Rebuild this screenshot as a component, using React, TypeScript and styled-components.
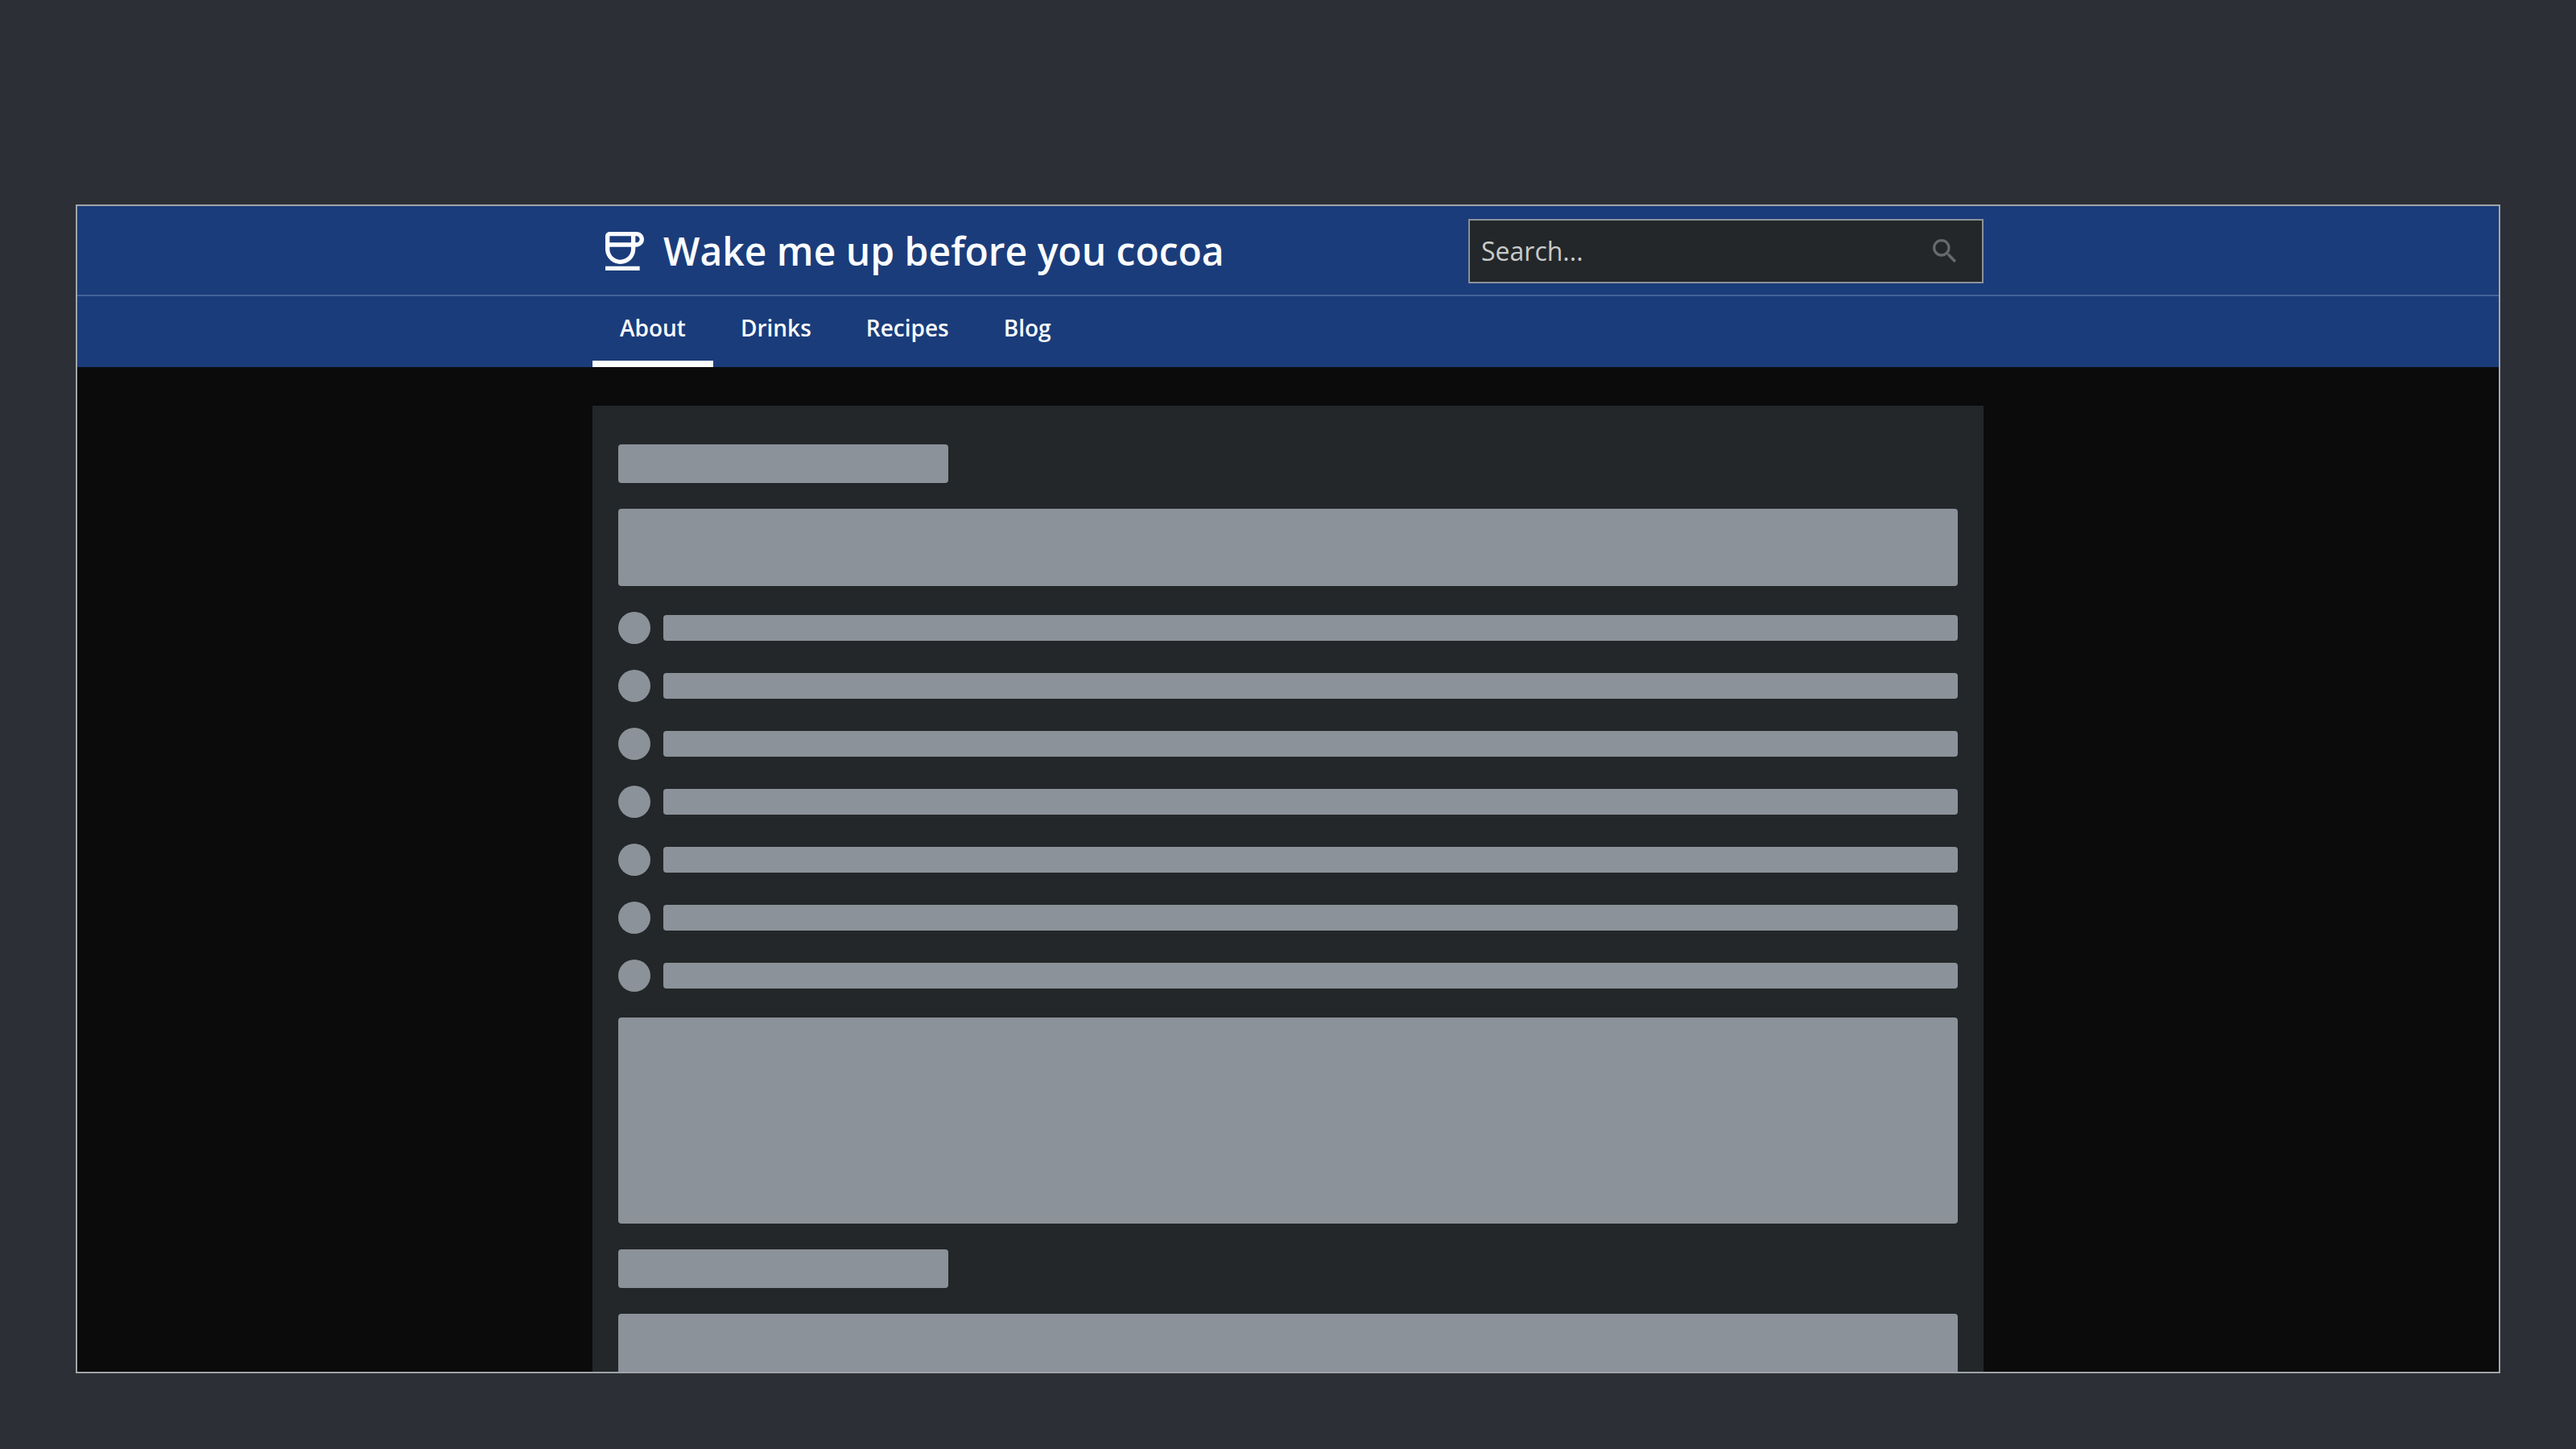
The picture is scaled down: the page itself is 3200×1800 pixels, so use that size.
import React from "react";
import styled, { createGlobalStyle } from "styled-components";

const GlobalStyle = createGlobalStyle`
  *, *::before, *::after { box-sizing: border-box; }
  body {
    margin: 0;
    background: #2c2f36;
    color: #fafcff;
    font-family: "Open Sans", "Noto Sans", sans-serif;
  }
`;

const Page = styled.div`
  display: flex;
  height: 100vh;
  padding: 254px 94px 94px;
`;

const Frame = styled.div`
  flex: 1;
  min-width: 0;
  overflow: hidden;
  border: 2px solid #a1a5a9;
  background: #0b0b0b;
`;

const Header = styled.header`
  background: #1b3c7a;
`;

const Container = styled.div`
  display: flex;
  width: 100%;
  max-width: 1728px;
  margin: 0 auto;
`;

const Masthead = styled.div`
  padding: 16px 0;
  box-shadow: inset 0 -2px #45629b;
`;

const MastheadRow = styled(Container)`
  align-items: center;
  justify-content: space-between;
  padding-left: 16px;
`;

const Brand = styled.a`
  display: flex;
  align-items: center;
  gap: 24px;
  color: inherit;
  text-decoration: none;
`;

const Title = styled.span`
  font-size: 48px;
  font-weight: 600;
  line-height: 64px;
  white-space: nowrap;
`;

const SearchBox = styled.form`
  display: flex;
  align-items: center;
  width: 640px;
  height: 80px;
  padding: 0 26px 0 14px;
  border: 2px solid #8b9299;
  background: #232729;
`;

const SearchInput = styled.input`
  flex: 1;
  min-width: 0;
  padding: 0;
  border: 0;
  outline: 0;
  background: transparent;
  color: #c9cacb;
  font: 400 32px/48px "Open Sans", "Noto Sans", sans-serif;

  &::placeholder {
    color: #c9cacb;
    opacity: 1;
  }
`;

const SearchButton = styled.button`
  display: flex;
  padding: 0;
  border: 0;
  background: transparent;
  color: #666a6d;
`;

const Tab = styled.a<{ $active?: boolean }>`
  height: 88px;
  padding: 20px 34px 0;
  color: inherit;
  font-size: 28px;
  font-weight: 600;
  line-height: 38px;
  text-decoration: none;
  border-bottom: 8px solid ${(p) => (p.$active ? "#fafcfb" : "transparent")};
`;

const Content = styled.main`
  width: 100%;
  max-width: 1728px;
  margin: 48px auto 0;
  padding: 48px 32px;
  display: flex;
  flex-direction: column;
  gap: 32px;
  background: #232729;
`;

const Block = styled.div<{ $height: number }>`
  height: ${(p) => p.$height}px;
  border-radius: 4px;
  background: #8b9299;
`;

const HeadingBlock = styled(Block)`
  width: 410px;
`;

const List = styled.ul`
  display: flex;
  flex-direction: column;
  gap: 32px;
  margin: 0;
  padding: 0;
  list-style: none;
`;

const ListRow = styled.li`
  display: flex;
  align-items: center;
  gap: 16px;
`;

const Dot = styled.div`
  width: 40px;
  height: 40px;
  border-radius: 50%;
  background: #8b9299;
`;

const Line = styled(Block)`
  flex: 1;
`;

const CupIcon = () => (
  <svg width="48" height="48" viewBox="4 3 18 18" fill="currentColor" fillRule="evenodd" aria-hidden="true">
    <path d="M18.5 3H6c-1.1 0-2 .9-2 2v6c0 3.87 3.13 7 7 7s7-3.13 7-7v-1h.5c1.93 0 3.5-1.57 3.5-3.5S20.43 3 18.5 3zM16 5v3H6V5h10zm0 5v1c0 2.76-2.24 5-5 5s-5-2.24-5-5v-1h10zm2.5-2H18V5h.5c.83 0 1.5.67 1.5 1.5S19.33 8 18.5 8zM4 19h16v2H4z" />
  </svg>
);

const MagnifierIcon = () => (
  <svg width="40" height="40" viewBox="0 0 24 24" fill="currentColor" aria-hidden="true">
    <path d="M15.5 14h-.79l-.28-.27A6.471 6.471 0 0 0 16 9.5 6.5 6.5 0 1 0 9.5 16c1.61 0 3.09-.59 4.23-1.57l.27.28v.79l5 4.99L20.49 19l-4.99-5zm-6 0C7.01 14 5 11.99 5 9.5S7.01 5 9.5 5 14 7.01 14 9.5 11.99 14 9.5 14z" />
  </svg>
);

const tabs = ["About", "Drinks", "Recipes", "Blog"];

export default function App() {
  return (
    <>
      <GlobalStyle />
      <Page>
        <Frame>
          <Header>
            <Masthead>
              <MastheadRow>
                <Brand href="#home">
                  <CupIcon />
                  <Title>Wake me up before you cocoa</Title>
                </Brand>
                <SearchBox role="search" onSubmit={(e) => e.preventDefault()}>
                  <SearchInput type="text" placeholder="Search..." aria-label="Search" />
                  <SearchButton type="submit" aria-label="Submit search">
                    <MagnifierIcon />
                  </SearchButton>
                </SearchBox>
              </MastheadRow>
            </Masthead>
            <Container as="nav">
              {tabs.map((name, i) => (
                <Tab key={name} href={`#${name.toLowerCase()}`} $active={i === 0}>
                  {name}
                </Tab>
              ))}
            </Container>
          </Header>
          <Content>
            <HeadingBlock $height={48} />
            <Block $height={96} />
            <List>
              {Array.from({ length: 7 }, (_, i) => (
                <ListRow key={i}>
                  <Dot />
                  <Line $height={32} />
                </ListRow>
              ))}
            </List>
            <Block $height={256} />
            <HeadingBlock $height={48} />
            <Block $height={96} />
          </Content>
        </Frame>
      </Page>
    </>
  );
}
